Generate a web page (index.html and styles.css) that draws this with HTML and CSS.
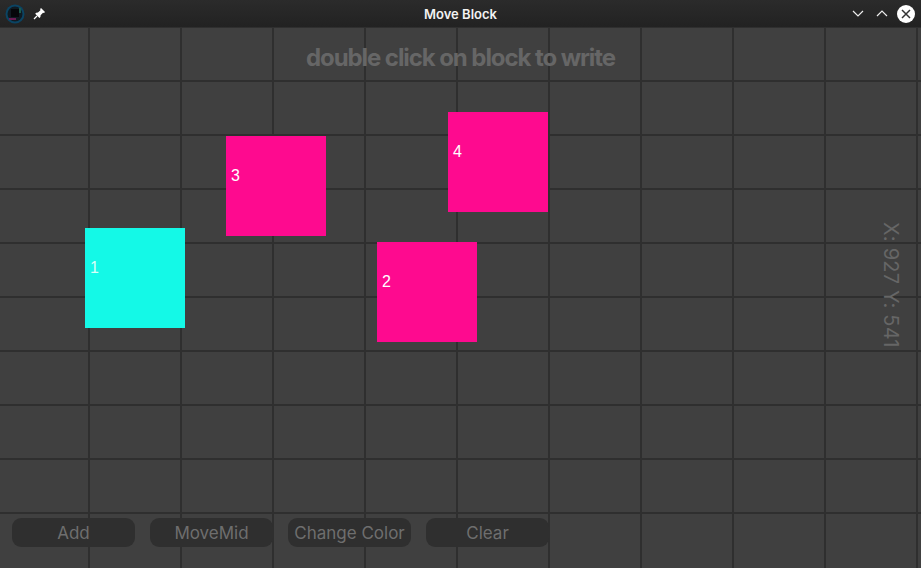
FILE: index.html
```html
<!DOCTYPE html>
<html lang="en">
<head>
    <meta charset="UTF-8">
    <title>Move Block</title>
    <link rel="stylesheet" href="styles.css">
</head>
<body>
    <div class="window">
        <header class="titlebar">
            <div class="titlebar-left">
                <svg class="app-icon" width="20" height="20" viewBox="0 0 20 20">
                    <circle cx="10" cy="10" r="9.5" fill="#0b4463"/>
                    <circle cx="10" cy="10" r="7.500" fill="#0f1a22"/>
                    <path d="M6 5h8v8H6z" fill="#05070a"/>
                    <path d="M4 14h7v2H4z" fill="#6b1c55"/>
                    <path d="M14 4h2v5h-2z" fill="#1d5a4a"/>
                </svg>
                <svg class="pin-icon" width="13" height="13" viewBox="0 0 13 13">
                    <path d="M8 1l4 4-1 1-1-.2-2.4 2.4L7.4 10l-1 1L2.200 6.800l1-1 1.800-.2L7.400 3.200 7.200 2z" fill="#fff"/>
                    <path d="M4 9l-3 3" stroke="#fff" stroke-width="1.200"/>
                </svg>
            </div>
            <div class="title">Move Block</div>
            <div class="titlebar-right">
                <svg width="12" height="7" viewBox="0 0 12 7"><path d="M1 1l5 5 5-5" fill="none" stroke="#eee" stroke-width="1.200"/></svg>
                <svg width="12" height="7" viewBox="0 0 12 7"><path d="M1 6l5-5 5 5" fill="none" stroke="#eee" stroke-width="1.200"/></svg>
                <svg class="close-icon" width="18" height="18" viewBox="0 0 18 18">
                    <circle cx="9" cy="9" r="9" fill="#fff"/>
                    <path d="M5 5l8 8M13 5l-8 8" stroke="#333" stroke-width="1.500"/>
                </svg>
            </div>
        </header>
        <main class="board">
            <h1 class="hint">double click on block to write</h1>
            <div class="block cyan block-1">1</div>
            <div class="block pink block-2">2</div>
            <div class="block pink block-3">3</div>
            <div class="block pink block-4">4</div>
            <div class="coords">X: 927 Y: 541</div>
            <div class="toolbar">
                <button>Add</button>
                <button>MoveMid</button>
                <button>Change Color</button>
                <button>Clear</button>
            </div>
        </main>
    </div>
</body>
</html>
```

FILE: styles.css
```css
html, body {
    margin: 0;
    padding: 0;
    height: 100%;
}
body {
    font-family: Inter, 'Liberation Sans', sans-serif;
    background: #404040;
    overflow: hidden;
}
.window {
    display: flex;
    flex-direction: column;
    height: 568px;
}
.titlebar {
    height: 27px;
    flex: none;
    display: flex;
    align-items: center;
    justify-content: space-between;
    position: relative;
    background: linear-gradient(#2b2b2b, #222);
    padding: 0 6px 0 5px;
}
.titlebar-left, .titlebar-right {
    display: flex;
    align-items: center;
}
.titlebar-left {
    gap: 8px;
}
.titlebar-right {
    gap: 12px;
}
.close-icon {
    margin-left: -3px;
}
.title {
    position: absolute;
    left: 0;
    right: 0;
    text-align: center;
    color: #f2f2f2;
    font-size: 13px;
    font-weight: 600;
}
/* vertical lines on top, then a strip hiding the last horizontal line */
.board {
    flex: 1;
    position: relative;
    background-color: #404040;
    background-image:
        linear-gradient(to right, #2f2f2f 2px, transparent 2px),
        linear-gradient(to top, #404040 2px, transparent 2px),
        linear-gradient(to bottom, #2f2f2f 2px, transparent 2px);
    background-size: 92px 54px, 100% 100%, 92px 54px;
    background-position: 88px 53px, 0 0, 88px 53px;
}
.hint {
    margin: 0;
    padding-top: 16px;
    text-align: center;
    color: #666;
    font-size: 24px;
    line-height: 30px;
    font-weight: 700;
    letter-spacing: -1.08px;
}
.block {
    position: absolute;
    width: 100px;
    height: 100px;
    display: flex;
    align-items: center;
    padding-left: 5px;
    box-sizing: border-box;
    color: #fff;
    font-family: 'Liberation Sans', sans-serif;
    font-size: 16px;
    padding-bottom: 20px;
}
.cyan {
    background: #14f9e7;
    color: #d6fff9;
}
.pink {
    background: #fe0a8f;
}
.block-1 { left: 85px; top: 201px; }
.block-2 { left: 377px; top: 215px; }
.block-3 { left: 226px; top: 109px; }
.block-4 { left: 448px; top: 85px; }
.coords {
    position: absolute;
    right: 18px;
    top: 195px;
    writing-mode: vertical-rl;
    color: #666;
    font-size: 20px;
    letter-spacing: 0.2px;
}
.toolbar {
    position: absolute;
    left: 12px;
    bottom: 21px;
    display: flex;
    gap: 15px;
}
.toolbar button {
    width: 123px;
    height: 29px;
    padding: 0;
    background: #2f2f2f;
    color: #6e6e6e;
    border: none;
    border-radius: 9px;
    font-family: inherit;
    font-size: 17px;
}
```
